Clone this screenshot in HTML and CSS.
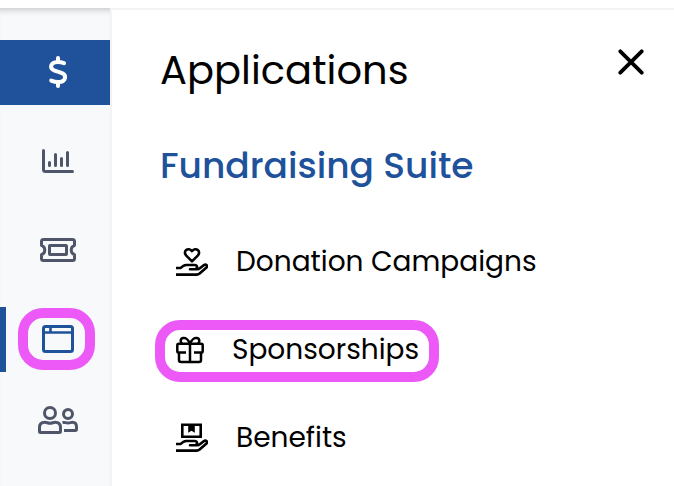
FILE: index.html
```html
<!DOCTYPE html>
<html lang="en">
<head>
  <meta charset="UTF-8">
  <meta name="viewport" content="width=device-width, initial-scale=1.0">
  <title>Applications</title>
  <link rel="stylesheet" href="styles.css">
</head>
<body>
  <header class="topbar"></header>

  <div class="layout">
    <!-- Sidebar -->
    <nav class="sidebar">
      <a class="nav-item primary" href="#" aria-label="Fundraising">
        <svg width="20" height="32" viewBox="0 0 20 32" fill="none" stroke="currentColor" stroke-width="4" stroke-linecap="round" stroke-linejoin="round">
          <path d="M10 2v4M10 26v4"/>
          <path d="M16 7.200C13 6 9.800 5.500 7 6.300C2.300 7.600 1.800 12.300 5.800 14.200C8.600 15.500 12 15.900 14.800 17.500C18.600 19.700 17.400 24.700 13.200 25.700C10 26.400 6.600 26 3.200 24.600"/>
        </svg>
      </a>
      <a class="nav-item" href="#" aria-label="Reports">
        <svg width="32" height="24" viewBox="0 0 32 24" fill="none" stroke="currentColor" stroke-width="3" stroke-linecap="round" stroke-linejoin="round">
          <path d="M1.5 1.5v19q0 2 2 2h27M7.5 13.5v3M13.5 5.5v11M19.5 9.5v7M25.5 3.5v13"/>
        </svg>
      </a>
      <a class="nav-item" href="#" aria-label="Tickets">
        <svg width="36" height="24" viewBox="0 0 36 24" fill="none" stroke="currentColor" stroke-width="3" stroke-linejoin="round">
          <path d="M3.500 1.500h29q2 0 2 2v3.800a5 5 0 0 0 0 9.400v3.800q0 2-2 2h-29q-2 0-2-2v-3.800a5 5 0 0 0 0-9.400V3.500q0-2 2-2z"/>
          <rect x="9.500" y="7.500" width="17" height="9" rx=".5"/>
        </svg>
      </a>
      <a class="nav-item active" href="#" aria-label="Applications">
        <span class="highlight">
          <svg width="32" height="28" viewBox="0 0 32 28" fill="none" stroke="currentColor" stroke-width="3" stroke-linejoin="round">
            <rect x="1.500" y="1.500" width="29" height="25" rx="2"/>
            <path d="M2 7.500h28M8.500 2v5" stroke-width="2.600"/>
          </svg>
        </span>
      </a>
      <a class="nav-item people" href="#" aria-label="Contacts">
        <svg width="40" height="28" viewBox="0 0 40 28" fill="none" stroke="currentColor" stroke-width="3" stroke-linejoin="round">
          <circle cx="12" cy="7" r="5.500"/>
          <path d="M1.500 25.500v-3.800q0-5.400 5.200-5.400c2 0 3 .9 5.300.9s3.300-.9 5.300-.9q5.200 0 5.200 5.400v3.800q0 1-1.100 1h-18.800q-1.100 0-1.100-1z"/>
          <circle cx="30" cy="8" r="4.500"/>
          <path d="M24.500 16.500c2.300-.5 3.200.5 5.500.5s2.800-.7 4.300-.7q4.200 0 4.200 4.500v2.500q0 1.200-1.200 1.200H26"/>
        </svg>
      </a>
    </nav>

    <!-- Applications panel -->
    <main class="panel">
      <div class="panel-header">
        <h1>Applications</h1>
        <button class="close" type="button" aria-label="Close">
          <svg width="26" height="26" viewBox="0 0 26 26" fill="none" stroke="currentColor" stroke-width="3.800" stroke-linecap="round">
            <path d="M2.300 2.300l21.400 21.400M23.700 2.300L2.300 23.700"/>
          </svg>
        </button>
      </div>
      <h2>Fundraising Suite</h2>
      <ul class="app-list">
        <li class="app">
          <svg width="32" height="30" viewBox="0 0 32 30" fill="none" stroke="currentColor" stroke-width="2.600" stroke-linejoin="round">
            <path d="M16 14.300l-5.700-5.700C6.200 4.300 12.200-.3 16 4.100C19.800-.3 25.800 4.300 21.700 8.600z"/>
            <path d="M0 21h4.500l3-2.200q1.200-.8 2.600-.8h8.500c3.400 0 3.200 4.300 0 4.300H14h7q1.800 0 3.200-1.200l3.500-2.900c2.400-1.700 4.400.9 2.500 2.600l-6.600 5.800q-1.200 1-2.800 1H0"/>
          </svg>
          <span class="label">Donation Campaigns</span>
        </li>
        <li class="app highlight">
          <svg width="28" height="28" viewBox="0 0 28 28" fill="none" stroke="currentColor" stroke-width="2.500" stroke-linejoin="round">
            <path d="M10 16.600H2.800q-1.500 0-1.500-1.600V9.400q0-1.600 1.500-1.600h22.400q1.500 0 1.500 1.600V15q0 1.600-1.500 1.600H18"/>
            <path d="M3 16.600v7.300q0 2 2 2h18q2 0 2-2v-7.300M14 8v17.500"/>
            <path d="M14 8C12.500 3.500 9.500 1.500 7 2C4 2.700 4 6.500 6.500 8M14 8C15.500 3.500 18.500 1.500 21 2C24 2.700 24 6.500 21.500 8"/>
          </svg>
          <span class="label">Sponsorships</span>
        </li>
        <li class="app">
          <svg width="32" height="30" viewBox="0 0 32 30" fill="none" stroke="currentColor" stroke-width="2.600" stroke-linejoin="round">
            <path d="M6.300 1.800h18.400v12H6.300z" stroke-linejoin="miter"/>
            <path d="M12.200 1.500h6.600v8.200l-3.300-2-3.300 2z" fill="currentColor" stroke="none"/>
            <path d="M0 21h4.500l3-2.200q1.200-.8 2.600-.8h8.500c3.400 0 3.200 4.300 0 4.300H14h7q1.800 0 3.200-1.200l3.500-2.900c2.400-1.700 4.400.9 2.500 2.600l-6.600 5.800q-1.200 1-2.800 1H0"/>
          </svg>
          <span class="label">Benefits</span>
        </li>
      </ul>
    </main>
  </div>
</body>
</html>
```

FILE: styles.css
```css
/* Global Styles */
* {
  box-sizing: border-box;
}
body {
  font-family: Poppins, 'Open Sans', sans-serif;
  margin: 0;
  height: 100vh;
  display: flex;
  flex-direction: column;
  overflow: hidden;
  background: #ffffff;
  color: #000000;
}
svg {
  display: block;
  flex-shrink: 0;
}
.topbar {
  height: 8px;
  flex-shrink: 0;
}
.layout {
  display: flex;
  flex: 1;
}

/* Sidebar */
.sidebar {
  width: 110px;
  padding-top: 32px;
  display: flex;
  flex-direction: column;
  gap: 24px;
  background: #f8f9fb;
  box-shadow: inset 0 7px 6px -5px rgba(0, 0, 0, 0.2);
}
.nav-item {
  height: 65px;
  display: flex;
  justify-content: center;
  align-items: center;
  padding: 0 0 1px 6px;
  color: #50566a;
}
.nav-item.primary {
  background: #20529b;
  color: #ffffff;
}
.nav-item.active {
  border-left: 6px solid #20529b;
  padding-left: 0;
  color: #20529b;
}
.nav-item.people {
  height: 49px;
}

/* Highlight ring */
.highlight {
  border: 10px solid #ec59f7;
  border-radius: 25px;
}
.nav-item .highlight {
  width: 77px;
  height: 62px;
  margin-right: 3px;
  margin-bottom: 1px;
  padding-left: 2px;
  display: flex;
  justify-content: center;
  align-items: center;
}

/* Panel */
.panel {
  flex: 1;
  border-top: 2px solid #f3f3f4;
  border-left: 2px solid #f3f3f4;
  padding: 30px 30px 0 43px;
}
.panel-header {
  display: flex;
  justify-content: space-between;
  align-items: flex-start;
  padding-left: 5px;
}
h1, h2 {
  margin: 0;
  white-space: nowrap;
}
h1 {
  font-size: 40px;
  font-weight: 400;
  line-height: 60px;
}
.close {
  border: none;
  background: none;
  padding: 0;
  margin-top: 9px;
  color: #000000;
}
h2 {
  margin-top: 40px;
  padding-left: 5px;
  color: #20529b;
  font-size: 36px;
  font-weight: 500;
  line-height: 52px;
}

/* App list */
.app-list {
  list-style: none;
  margin: 40px 0 0;
  padding: 0;
  display: flex;
  flex-direction: column;
  align-items: flex-start;
  gap: 26px;
}
.app {
  height: 62px;
  display: flex;
  align-items: center;
  gap: 28px;
  padding-left: 21px;
  padding-bottom: 2px;
}
.app.highlight {
  width: 284px;
  padding-left: 11px;
}
.label {
  font-size: 28px;
  line-height: 40px;
  white-space: nowrap;
}
```
